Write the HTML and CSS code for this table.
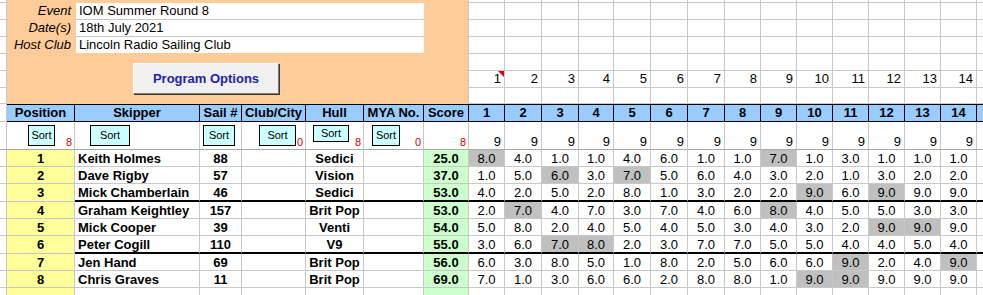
FILE: index.html
```html
<!DOCTYPE html>
<html>
<head>
<meta charset="utf-8">
<link rel="stylesheet" href="styles.css">
</head>
<body>
<div class="sheet">
  <div class="panel">
    <div class="info">
      <div class="lbl">Event</div><div class="val">IOM Summer Round 8</div>
      <div class="lbl lt">Date(s)</div><div class="val vt">18th July 2021</div>
      <div class="lbl lt">Host Club</div><div class="val vt">Lincoln Radio Sailing Club</div>
    </div>
    <div class="po">Program Options</div>
  </div>

  <!-- top empty grid rows -->
  <div></div><div></div><div></div><div></div><div></div><div></div><div></div><div></div><div></div><div></div><div></div><div></div><div></div><div></div><div></div><div></div>
  <div></div><div></div><div></div><div></div><div></div><div></div><div></div><div></div><div></div><div></div><div></div><div></div><div></div><div></div><div></div><div></div>
  <div></div><div></div><div></div><div></div><div></div><div></div><div></div><div></div><div></div><div></div><div></div><div></div><div></div><div></div><div></div><div></div>
  <div></div><div></div><div></div><div></div><div></div><div></div><div></div><div></div><div></div><div></div><div></div><div></div><div></div><div></div><div></div><div></div>
  <div></div><div></div><div></div><div></div><div></div><div></div><div></div><div></div><div></div><div></div><div></div><div></div><div></div><div></div><div></div><div></div>
  <div></div><div class="n note">1</div><div class="n">2</div><div class="n">3</div><div class="n">4</div><div class="n">5</div><div class="n">6</div><div class="n">7</div><div class="n">8</div><div class="n">9</div><div class="n">10</div><div class="n">11</div><div class="n">12</div><div class="n">13</div><div class="n">14</div><div></div>
  <div></div><div></div><div></div><div></div><div></div><div></div><div></div><div></div><div></div><div></div><div></div><div></div><div></div><div></div><div></div><div></div>

  <!-- header -->
  <div></div>
  <div class="h">Position</div><div class="h">Skipper</div><div class="h">Sail #</div><div class="h">Club/City</div><div class="h">Hull</div><div class="h">MYA No.</div><div class="h">Score</div>
  <div class="h">1</div><div class="h">2</div><div class="h">3</div><div class="h">4</div><div class="h">5</div><div class="h">6</div><div class="h">7</div><div class="h">8</div><div class="h">9</div><div class="h">10</div><div class="h">11</div><div class="h">12</div><div class="h">13</div><div class="h">14</div><div class="h"></div>

  <!-- sort row -->
  <div class="sr"></div>
  <div class="s"><span class="sb b-pos">Sort</span><span class="rn">8</span></div>
  <div class="s"><span class="sb b-skip">Sort</span></div>
  <div class="s"><span class="sb b-sail">Sort</span></div>
  <div class="s"><span class="sb b-club">Sort</span><span class="rn">0</span></div>
  <div class="s"><span class="sb b-hull">Sort</span><span class="rn">8</span></div>
  <div class="s"><span class="sb b-mya">Sort</span><span class="rn">0</span></div>
  <div class="s"><span class="rn">8</span></div>
  <div class="s9">9</div><div class="s9">9</div><div class="s9">9</div><div class="s9">9</div><div class="s9">9</div><div class="s9">9</div><div class="s9">9</div><div class="s9">9</div><div class="s9">9</div><div class="s9">9</div><div class="s9">9</div><div class="s9">9</div><div class="s9">9</div><div class="s9">9</div><div class="s9"></div>

  <!-- row 1 -->
  <div></div><div class="d pos">1</div><div class="d sk">Keith Holmes</div><div class="d ctr">88</div><div class="d"></div><div class="d ctr">Sedici</div><div class="d"></div><div class="d sc">25.0</div>
  <div class="d r g">8.0</div><div class="d r">4.0</div><div class="d r">1.0</div><div class="d r">1.0</div><div class="d r">4.0</div><div class="d r">6.0</div><div class="d r">1.0</div><div class="d r">1.0</div><div class="d r g">7.0</div><div class="d r">1.0</div><div class="d r">3.0</div><div class="d r">1.0</div><div class="d r">1.0</div><div class="d r">1.0</div><div class="d"></div>
  <!-- row 2 -->
  <div></div><div class="d pos">2</div><div class="d sk">Dave Rigby</div><div class="d ctr">57</div><div class="d"></div><div class="d ctr">Vision</div><div class="d"></div><div class="d sc">37.0</div>
  <div class="d r">1.0</div><div class="d r">5.0</div><div class="d r g">6.0</div><div class="d r">3.0</div><div class="d r g">7.0</div><div class="d r">5.0</div><div class="d r">6.0</div><div class="d r">4.0</div><div class="d r">3.0</div><div class="d r">2.0</div><div class="d r">1.0</div><div class="d r">3.0</div><div class="d r">2.0</div><div class="d r">2.0</div><div class="d"></div>
  <!-- row 3 -->
  <div></div><div class="d pos">3</div><div class="d sk tk">Mick Chamberlain</div><div class="d ctr tk">46</div><div class="d tk"></div><div class="d ctr tk">Sedici</div><div class="d tk"></div><div class="d sc tk">53.0</div>
  <div class="d r tk">4.0</div><div class="d r tk">2.0</div><div class="d r tk">5.0</div><div class="d r tk">2.0</div><div class="d r tk">8.0</div><div class="d r tk">1.0</div><div class="d r tk">3.0</div><div class="d r tk">2.0</div><div class="d r tk">2.0</div><div class="d r g tk">9.0</div><div class="d r tk">6.0</div><div class="d r g tk">9.0</div><div class="d r tk">9.0</div><div class="d r tk">9.0</div><div class="d tk"></div>
  <!-- row 4 -->
  <div></div><div class="d pos">4</div><div class="d sk">Graham Keightley</div><div class="d ctr">157</div><div class="d"></div><div class="d ctr">Brit Pop</div><div class="d"></div><div class="d sc">53.0</div>
  <div class="d r">2.0</div><div class="d r g">7.0</div><div class="d r">4.0</div><div class="d r">7.0</div><div class="d r">3.0</div><div class="d r">7.0</div><div class="d r">4.0</div><div class="d r">6.0</div><div class="d r g">8.0</div><div class="d r">4.0</div><div class="d r">5.0</div><div class="d r">5.0</div><div class="d r">3.0</div><div class="d r">3.0</div><div class="d"></div>
  <!-- row 5 -->
  <div></div><div class="d pos">5</div><div class="d sk">Mick Cooper</div><div class="d ctr">39</div><div class="d"></div><div class="d ctr">Venti</div><div class="d"></div><div class="d sc">54.0</div>
  <div class="d r">5.0</div><div class="d r">8.0</div><div class="d r">2.0</div><div class="d r">4.0</div><div class="d r">5.0</div><div class="d r">4.0</div><div class="d r">5.0</div><div class="d r">3.0</div><div class="d r">4.0</div><div class="d r">3.0</div><div class="d r">2.0</div><div class="d r g">9.0</div><div class="d r g">9.0</div><div class="d r">9.0</div><div class="d"></div>
  <!-- row 6 -->
  <div></div><div class="d pos">6</div><div class="d sk tk">Peter Cogill</div><div class="d ctr tk">110</div><div class="d tk"></div><div class="d ctr tk">V9</div><div class="d tk"></div><div class="d sc tk">55.0</div>
  <div class="d r tk">3.0</div><div class="d r tk">6.0</div><div class="d r g tk">7.0</div><div class="d r g tk">8.0</div><div class="d r tk">2.0</div><div class="d r tk">3.0</div><div class="d r tk">7.0</div><div class="d r tk">7.0</div><div class="d r tk">5.0</div><div class="d r tk">5.0</div><div class="d r tk">4.0</div><div class="d r tk">4.0</div><div class="d r tk">5.0</div><div class="d r tk">4.0</div><div class="d tk"></div>
  <!-- row 7 -->
  <div></div><div class="d pos">7</div><div class="d sk">Jen Hand</div><div class="d ctr">69</div><div class="d"></div><div class="d ctr">Brit Pop</div><div class="d"></div><div class="d sc">56.0</div>
  <div class="d r">6.0</div><div class="d r">3.0</div><div class="d r">8.0</div><div class="d r">5.0</div><div class="d r">1.0</div><div class="d r">8.0</div><div class="d r">2.0</div><div class="d r">5.0</div><div class="d r">6.0</div><div class="d r">6.0</div><div class="d r g">9.0</div><div class="d r">2.0</div><div class="d r">4.0</div><div class="d r g">9.0</div><div class="d"></div>
  <!-- row 8 -->
  <div></div><div class="d pos">8</div><div class="d sk">Chris Graves</div><div class="d ctr">11</div><div class="d"></div><div class="d ctr">Brit Pop</div><div class="d"></div><div class="d sc">69.0</div>
  <div class="d r">7.0</div><div class="d r">1.0</div><div class="d r">3.0</div><div class="d r">6.0</div><div class="d r">6.0</div><div class="d r">2.0</div><div class="d r">8.0</div><div class="d r">8.0</div><div class="d r">1.0</div><div class="d r g">9.0</div><div class="d r g">9.0</div><div class="d r">9.0</div><div class="d r">9.0</div><div class="d r">9.0</div><div class="d"></div>
  <!-- row 9 (empty) -->
  <div></div><div class="d pos"></div><div class="d"></div><div class="d"></div><div class="d"></div><div class="d"></div><div class="d"></div><div class="d sc"></div>
  <div class="d"></div><div class="d"></div><div class="d"></div><div class="d"></div><div class="d"></div><div class="d"></div><div class="d"></div><div class="d"></div><div class="d"></div><div class="d"></div><div class="d"></div><div class="d"></div><div class="d"></div><div class="d"></div><div class="d"></div>
</div>
</body>
</html>
```

FILE: styles.css
```css
html, body {
  margin: 0;
  padding: 0;
  background: #fff;
  overflow: hidden;
}

body {
  font-family: "Liberation Sans", Arial, sans-serif;
  font-size: 13px;
  color: #000;
}

.sheet {
  display: grid;
  width: max-content;
  grid-template-columns: 7px 68px 125px 42px 64px 58px 60px 45px 36px 37px 37px 35px 37px 37px 37px 36px 36px 36px 36px 36px 36px 36px 36px;
  grid-template-rows: 3px 17px 17px 17px 17px 17px 16px 18px 28px 17px 17px 18px 17px 17px 18px 17px 17px 17px;
}

.sheet > div {
  box-sizing: border-box;
  border-right: 1px solid #c8c8c8;
  border-bottom: 1px solid #c8c8c8;
  overflow: hidden;
  white-space: nowrap;
  min-width: 0;
}

/* orange info panel */
.sheet > .panel {
  grid-column: 2 / 9;
  grid-row: 1 / 8;
  background: #ffcc99;
  border-bottom: none;
  display: flex;
  flex-direction: column;
  padding-top: 3px;
}

.info {
  display: grid;
  grid-template-columns: 69px 348px;
  grid-template-rows: 16px 17px 17px;
}

.lbl {
  font-style: italic;
  text-align: right;
  padding-right: 5px;
  line-height: 16px;
}

.lbl.lt {
  padding-top: 1px;
}

.val {
  box-sizing: border-box;
  background: #fff;
  padding-left: 3px;
  line-height: 16px;
}

.val.vt {
  border-top: 1px solid #c8c8c8;
}

.po {
  box-sizing: border-box;
  margin: 10px 0 0 126px;
  width: 146px;
  height: 31px;
  background: #f0f0f0;
  border: 1px solid;
  border-color: #ffffff #7a7a7a #7a7a7a #ffffff;
  box-shadow: 1px 1px 0 #3c3c3c;
  color: #1f1fb0;
  font-weight: bold;
  display: flex;
  align-items: center;
  justify-content: center;
}

/* column number row */
.n {
  text-align: right;
  padding-right: 3px;
  line-height: 16px;
}

.note {
  position: relative;
}

.note::after {
  content: "";
  position: absolute;
  top: 0;
  right: 0;
  width: 0;
  height: 0;
  border-top: 6px solid #e00000;
  border-left: 6px solid transparent;
}

/* header */
.sheet > .h {
  background: #99ccff;
  border-top: 1px solid #000;
  border-right: 1px solid #000;
  border-bottom: 1px solid #000;
  font-weight: bold;
  text-align: center;
  line-height: 16px;
}

/* sort row */
.sheet > .s {
  display: flex;
  align-items: flex-start;
  padding-top: 3px;
  border-bottom-color: #a8a8a8;
}

.sheet > .sr,
.sheet > .s9 {
  border-bottom-color: #a8a8a8;
}

.sb {
  box-sizing: border-box;
  height: 21px;
  line-height: 19px;
  font-size: 11px;
  background: #ccffff;
  border: 1px solid #000;
  text-align: center;
  flex: none;
}

.b-pos { margin-left: 21px; width: 27px; }
.b-skip { margin-left: 15px; width: 40px; }
.b-sail { margin-left: 3px; width: 32px; }
.b-club { margin-left: 17px; width: 37px; }
.b-hull { margin-left: 7px; width: 36px; height: 17px; line-height: 15px; }
.b-mya { margin-left: 8px; width: 28px; }

.rn {
  margin-left: auto;
  align-self: flex-end;
  color: #e00000;
  font-size: 11px;
  line-height: 11px;
  padding-right: 2px;
  padding-bottom: 1px;
}

.s9 {
  text-align: right;
  padding: 12px 3px 0 0;
  line-height: 15px;
}

/* data */
.d {
  padding-top: 2px;
  line-height: 14px;
}

.pos {
  background: #ffff99;
  font-weight: bold;
  text-align: center;
}

.sk {
  font-weight: bold;
  padding-left: 3px;
}

.ctr {
  font-weight: bold;
  text-align: center;
}

.sc {
  background: #ccffcc;
  font-weight: bold;
  text-align: center;
}

.r {
  text-align: center;
}

.g {
  background: #c0c0c0;
}

.sheet > .tk {
  border-bottom: 2px solid #000;
}
```
